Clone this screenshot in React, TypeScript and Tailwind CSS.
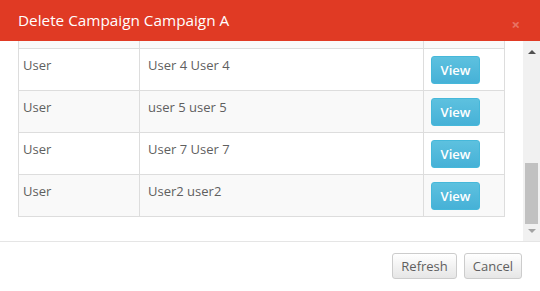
import React from "react";

const rows = [
  { type: "User", name: "User 4 User 4", shaded: false },
  { type: "User", name: "user 5 user 5", shaded: true },
  { type: "User", name: "User 7 User 7", shaded: false },
  { type: "User", name: "User2 user2", shaded: true },
];

export default function App() {
  return (
    <div
      className="w-[540px] h-[291px] bg-white flex flex-col overflow-hidden"
      style={{ fontFamily: '"Open Sans", sans-serif' }}
    >
      <div className="h-[41px] shrink-0 bg-[#e03a24] flex items-center justify-between pl-[18px] pr-[20px]">
        <span className="text-white text-[15.3px] leading-none">Delete Campaign Campaign A</span>
        <span className="text-white/30 text-[15px] leading-none font-bold mt-[7px]">×</span>
      </div>
      <div className="h-[200px] shrink-0 flex flex-row">
        <div className="flex-1 overflow-hidden flex flex-col justify-end px-[18px] pb-[24px]">
          <div className="border-l border-r border-b border-[#dddddd] shrink-0">
            <div className="flex h-[7px] bg-[#f9f9f9]">
              <div className="w-[121px] border-r border-[#dddddd]" />
              <div className="w-[284px] border-r border-[#dddddd]" />
              <div className="flex-1" />
            </div>
            {rows.map((r, i) => (
              <div
                key={i}
                className={`flex h-[42px] border-t border-[#dddddd] text-[13px] leading-[18.57px] text-[#5f5f5f] ${
                  r.shaded ? "bg-[#f9f9f9]" : "bg-white"
                }`}
              >
                <div className="w-[121px] border-r border-[#dddddd] pl-[4px] pt-[7px]">{r.type}</div>
                <div className="w-[284px] border-r border-[#dddddd] pl-[8px] pt-[7px]">{r.name}</div>
                <div className="flex-1 pl-[7px] pt-[7px]">
                  <button className="w-[49px] h-[28px] rounded-[3px] border border-[#46b8da] bg-gradient-to-b from-[#5dc1df] to-[#46b1d7] text-white text-[13px] font-semibold leading-none">
                    View
                  </button>
                </div>
              </div>
            ))}
          </div>
        </div>
        <div className="w-[17px] bg-[#f1f1f1] flex flex-col items-center">
          <div className="h-[22px] w-full flex items-center justify-center">
            <div className="w-0 h-0 border-l-[4px] border-r-[4px] border-b-[4px] border-l-transparent border-r-transparent border-b-[#505050]" />
          </div>
          <div className="flex-1 w-full px-[2px] flex flex-col justify-end">
            <div className="h-[61px] bg-[#c1c1c1] mb-[1px]" />
          </div>
          <div className="h-[16px] w-full flex items-start justify-center pt-[4px]">
            <div className="w-0 h-0 border-l-[4px] border-r-[4px] border-t-[4px] border-l-transparent border-r-transparent border-t-[#a3a3a3]" />
          </div>
        </div>
      </div>
      <div className="flex-1 border-t border-[#e5e5e5] flex justify-end items-start gap-[7px] pt-[11px] pr-[18px]">
        <button className="h-[26px] px-[8px] rounded-[3px] border border-[#cccccc] bg-gradient-to-b from-white to-[#e6e6e6] text-[13px] text-[#5f5f5f] leading-none">
          Refresh
        </button>
        <button className="h-[26px] px-[8px] rounded-[3px] border border-[#cccccc] bg-gradient-to-b from-white to-[#e6e6e6] text-[13px] text-[#5f5f5f] leading-none">
          Cancel
        </button>
      </div>
    </div>
  );
}
